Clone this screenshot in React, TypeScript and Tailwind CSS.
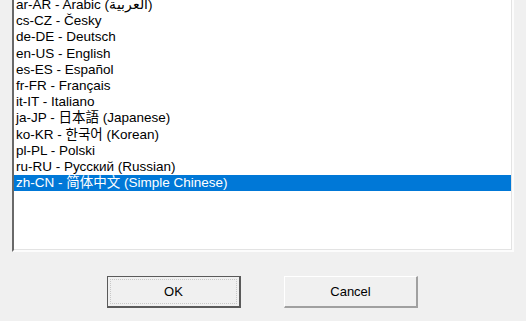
// Language picker dialog: a sunken list box of locales plus OK / Cancel.

const languages = [
  "ar-AR - Arabic (العربية)",
  "cs-CZ - Česky",
  "de-DE - Deutsch",
  "en-US - English",
  "es-ES - Español",
  "fr-FR - Français",
  "it-IT - Italiano",
  "ja-JP - 日本語 (Japanese)",
  "ko-KR - 한국어 (Korean)",
  "pl-PL - Polski",
  "ru-RU - Русский (Russian)",
  "zh-CN - 简体中文 (Simple Chinese)",
];

const selected = "zh-CN - 简体中文 (Simple Chinese)";

export default function App() {
  return (
    <div
      className="w-[526px] h-[321px] bg-[#f0f0f0] overflow-hidden text-[13.5px] text-black"
      style={{ fontFamily: '"Liberation Sans", "Noto Sans CJK SC", "Noto Sans", sans-serif' }}
    >
      {/* list box, its top edge scrolled off the window */}
      <div className="ml-[12px] -mt-[5px] w-[502px] h-[257px] border-t-2 border-l-2 border-t-[#696969] border-l-[#696969] border-r-2 border-b-2 border-r-[#fcfcfc] border-b-[#fcfcfc]">
        <div className="h-full border-r border-b border-[#e3e3e3] bg-white overflow-hidden">
          {languages.map((lang) => (
            <div
              key={lang}
              className={
                lang === selected
                  ? "h-[16.2px] leading-[16px] pl-[2px] bg-[#0078d7] text-white whitespace-nowrap"
                  : "h-[16.2px] leading-[16px] pl-[2px] whitespace-nowrap"
              }
            >
              {lang}
            </div>
          ))}
        </div>
      </div>

      {/* buttons */}
      <div className="flex gap-[43px] pl-[107px] mt-[24px] text-[13px]">
        <button className="w-[134px] h-[32px] border border-[#5a5a5a] border-b-2 border-r-2 bg-[#f0f0f0] p-[2px]">
          <div className="h-full w-full border border-dotted border-[#c8c8c8] flex items-center justify-center">
            OK
          </div>
        </button>
        <button className="w-[134px] h-[32px] border border-t-white border-l-white border-b-2 border-r-2 border-b-[#a0a0a0] border-r-[#a0a0a0] bg-[#f0f0f0] flex items-center justify-center">
          Cancel
        </button>
      </div>
    </div>
  );
}
